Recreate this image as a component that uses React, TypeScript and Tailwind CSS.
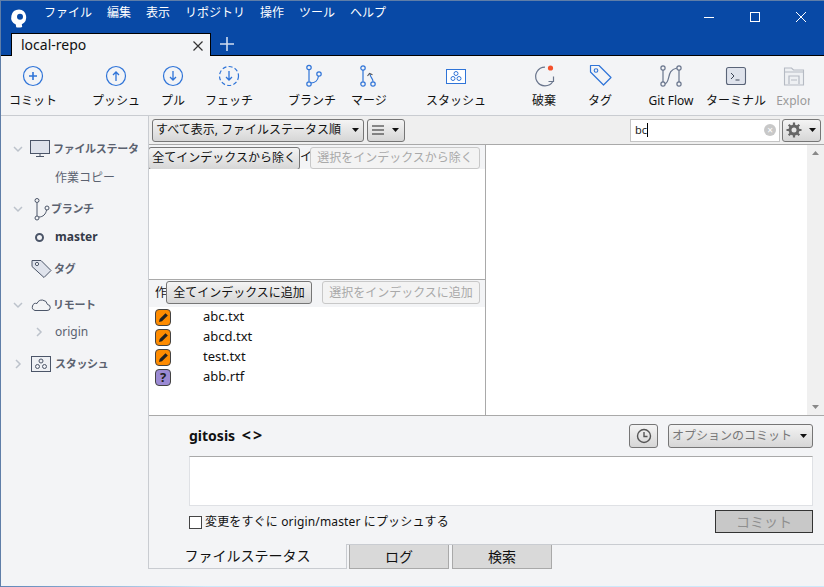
import React from "react";

const font = { fontFamily: '"Noto Sans", "Noto Sans CJK JP", sans-serif' };

const Ic = ({ children, w = 32, h = 32 }: { children: React.ReactNode; w?: number; h?: number }) => (
  <svg width={w} height={h} viewBox={`0 0 ${w} ${h}`} fill="none">{children}</svg>
);

const B = "#2f74d8";

const Circle = ({ arrow, dashed }: { arrow: "plus" | "up" | "down"; dashed?: boolean }) => (
  <Ic>
    <circle cx="16" cy="16" r="9.5" stroke={B} strokeWidth="1.2" strokeDasharray={dashed ? "4 2.3" : undefined} />
    {arrow === "plus" && <path d="M12 16h8M16 12v8" stroke={B} strokeWidth="1.6" />}
    {arrow === "up" && <path d="M16 21v-9M13 15l3-3 3 3" stroke={B} strokeWidth="1.3" />}
    {arrow === "down" && <path d="M16 11v9M13 17l3 3 3-3" stroke={B} strokeWidth="1.3" />}
  </Ic>
);

const BranchIcon = ({ c = B }: { c?: string }) => (
  <Ic>
    <circle cx="13" cy="7.5" r="2.2" stroke={c} strokeWidth="1.2" />
    <circle cx="13" cy="24" r="2.2" stroke={c} strokeWidth="1.2" />
    <circle cx="23" cy="14" r="2.2" stroke={c} strokeWidth="1.2" />
    <path d="M13 10v11.5M15 23c4 0 7-3 7.5-7" stroke={c} strokeWidth="1.2" />
  </Ic>
);

const MergeIcon = () => (
  <Ic>
    <circle cx="10" cy="8" r="2.2" stroke={B} strokeWidth="1.2" />
    <circle cx="10" cy="24" r="2.2" stroke={B} strokeWidth="1.2" />
    <circle cx="20" cy="24" r="2.2" stroke={B} strokeWidth="1.2" />
    <path d="M10 10v11.5M20 21.5c0-3-2.5-3.5-3-7.5" stroke={B} strokeWidth="1.2" />
    <path d="M14.5 16l2-2.5 3 1.3" stroke="#555" strokeWidth="1.1" />
  </Ic>
);

const StashIcon = ({ c = B, fill = "white" }: { c?: string; fill?: string }) => (
  <Ic>
    <rect x="6.5" y="9.5" width="19" height="14" fill={fill} stroke={c} strokeWidth="1" />
    <circle cx="16" cy="13.5" r="2" stroke={c} />
    <circle cx="13" cy="18.5" r="2" stroke={c} />
    <circle cx="19" cy="18.5" r="2" stroke={c} />
  </Ic>
);

const DiscardIcon = () => (
  <Ic>
    <path d="M17 7.2a9.3 9.3 0 1 0 8 14" stroke="#69758c" strokeWidth="1.2" />
    <path d="M20.5 21.5h5v-5" stroke="#69758c" strokeWidth="1.2" />
    <circle cx="22.5" cy="8" r="2.6" fill="#f4512c" />
  </Ic>
);

const TagIcon = ({ c = B, fill = "none" }: { c?: string; fill?: string }) => (
  <Ic>
    <path d="M6.5 7.5h8.5l12 12-7.5 7.5-13-13z" fill={fill} stroke={c} strokeWidth="1.2" strokeLinejoin="round" transform="translate(0 -2)" />
    <circle cx="12" cy="10.5" r="1.8" stroke={c} strokeWidth="1.1" />
  </Ic>
);

const FlowIcon = () => (
  <Ic>
    <circle cx="8" cy="8" r="2.1" stroke="#69758c" strokeWidth="1.2" />
    <circle cx="8" cy="24" r="2.1" stroke="#69758c" strokeWidth="1.2" />
    <circle cx="24" cy="8" r="2.1" stroke="#69758c" strokeWidth="1.2" />
    <circle cx="24" cy="24" r="2.1" stroke="#69758c" strokeWidth="1.2" />
    <path d="M8 10v12M24 10v12M10 24c6-3 1-14 12-16" stroke="#69758c" strokeWidth="1.2" />
  </Ic>
);

const TermIcon = () => (
  <Ic>
    <rect x="6.5" y="7.5" width="19" height="17" rx="2" fill="#dfe3ec" stroke="#5a6478" strokeWidth="1.1" />
    <path d="M11 13l3 3-3 3M15.5 20h4" stroke="#3d4657" strokeWidth="1" />
  </Ic>
);

const ExplorerIcon = () => (
  <Ic>
    <path d="M6.5 8h7l2 2h10v15h-19z" fill="#eef0f3" stroke="#b5bac3" strokeWidth="1.1" />
    <path d="M6.5 12h19" stroke="#b5bac3" />
    <path d="M11 24v-8h10v8M13 20h6" stroke="#b5bac3" strokeWidth="1.2" />
  </Ic>
);

const tools: { label: string; icon: React.ReactNode; cls: string; muted?: boolean }[] = [
  { label: "コミット", icon: <Circle arrow="plus" />, cls: "ml-[4px]" },
  { label: "プッシュ", icon: <Circle arrow="up" />, cls: "ml-[27px]" },
  { label: "プル", icon: <Circle arrow="down" />, cls: "ml-[1px]" },
  { label: "フェッチ", icon: <Circle arrow="down" dashed />, cls: "ml-0" },
  { label: "ブランチ", icon: <BranchIcon />, cls: "ml-[27px]" },
  { label: "マージ", icon: <MergeIcon />, cls: "ml-[1px]" },
  { label: "スタッシュ", icon: <StashIcon />, cls: "ml-[31px]" },
  { label: "破棄", icon: <DiscardIcon />, cls: "ml-[32px]" },
  { label: "タグ", icon: <TagIcon />, cls: "ml-0" },
  { label: "Git Flow", icon: <FlowIcon />, cls: "ml-[15px]" },
  { label: "ターミナル", icon: <TermIcon />, cls: "ml-[9px]" },
  { label: "Explor", icon: <ExplorerIcon />, cls: "ml-[2px]", muted: true },
];

const Caret = ({ c = "#111" }: { c?: string }) => (
  <svg width="7" height="4" viewBox="0 0 7 4"><path d="M0 0h7L3.5 4z" fill={c} /></svg>
);

const Chevron = ({ open }: { open?: boolean }) => (
  <svg width="10" height="10" viewBox="0 0 10 10" fill="none">
    <path d={open ? "M1 3l4 4 4-4" : "M3 1l4 4-4 4"} stroke="#bcc2cb" strokeWidth="1.5" />
  </svg>
);

const btn = "flex items-center rounded-[3px] border border-[#767676] bg-gradient-to-b from-[#f4f4f4] to-[#d6d6d6] text-[12px] text-[#111] whitespace-nowrap shrink-0";
const btnOff = "flex items-center justify-center rounded-[3px] border border-[#c8c8c8] bg-[#f3f3f3] text-[12px] text-[#a9a9a9] whitespace-nowrap shrink-0";

const Pencil = () => (
  <div className="w-[16px] h-[17px] rounded-[4px] border border-[#444] bg-[#ff8c00] flex items-center justify-center">
    <svg width="11" height="11" viewBox="0 0 11 11"><path d="M1 10l.7-3L7.5 1.2l2.3 2.3L4 9.3z" fill="#222" /></svg>
  </div>
);
const Question = () => (
  <div className="w-[16px] h-[17px] rounded-[4px] border border-[#444] bg-[#9b8ad4] flex items-center justify-center text-[13px] font-bold leading-none text-[#222]">?</div>
);

const files = [
  { n: "abc.txt", i: <Pencil /> },
  { n: "abcd.txt", i: <Pencil /> },
  { n: "test.txt", i: <Pencil /> },
  { n: "abb.rtf", i: <Question /> },
];

const sideHead = "font-bold text-[11px] tracking-[-0.3px] whitespace-nowrap";

export default function App() {
  return (
    <div style={font} className="w-[824px] h-[587px] flex flex-col overflow-hidden bg-[#f3f4f6] text-[12px] text-[#111] border-l border-t border-[#5f7ea8]">
      {/* title area */}
      <div className="h-[55px] shrink-0 bg-[#0849a6] border-b border-black flex flex-col">
        <div className="h-[32px] flex items-center text-white">
          <svg width="18" height="20" viewBox="0 0 18 20" className="ml-[9px] mt-[1px]">
            <path d="M9 1.5a7.8 7.8 0 0 0-3.2 14.9l.4 2.9c2 .4 4.2.3 6-.4l-.4-2.6A7.8 7.8 0 0 0 9 1.5z" fill="white" />
            <circle cx="10" cy="8.8" r="3" fill="#0849a6" />
          </svg>
          <div className="flex items-center mb-[8px]">
            <span className="ml-[16px]">ファイル</span>
            <span className="ml-[15px]">編集</span>
            <span className="ml-[15px]">表示</span>
            <span className="ml-[15px]">リポジトリ</span>
            <span className="ml-[15px]">操作</span>
            <span className="ml-[15px]">ツール</span>
            <span className="ml-[15px]">ヘルプ</span>
          </div>
          <div className="ml-auto flex items-center">
            <svg width="12" height="12" viewBox="0 0 12 12"><path d="M1 6.5h10" stroke="white" /></svg>
            <svg width="12" height="12" viewBox="0 0 12 12" className="ml-[34px]"><rect x="1.5" y="1.5" width="9" height="9" fill="none" stroke="white" /></svg>
            <svg width="12" height="12" viewBox="0 0 12 12" className="ml-[34px] mr-[17px]"><path d="M1 1l10 10M11 1L1 11" stroke="white" /></svg>
          </div>
        </div>
        <div className="h-[22px] flex items-end">
          <div className="ml-[10px] w-[200px] h-[23px] bg-[#f3f4f6] border border-black border-b-0 flex items-center pl-[9px] pr-[7px] pb-[2px] text-[14px] relative top-px">
            <span>local-repo</span>
            <svg width="10" height="10" viewBox="0 0 10 10" className="ml-auto mt-[3px]"><path d="M.5.5l9 9M9.5.5l-9 9" stroke="#333" strokeWidth="1.2" /></svg>
          </div>
          <svg width="14" height="14" viewBox="0 0 14 14" className="ml-[9px] mb-[4px]"><path d="M7 0v14M0 7h14" stroke="#cfdcf0" strokeWidth="1.6" /></svg>
        </div>
      </div>

      {/* toolbar */}
      <div className="h-[59px] shrink-0 flex overflow-hidden">
        <div className="flex w-[809px] overflow-hidden pt-[4px]">
          {tools.map((t) => (
            <div key={t.label} className={`w-[56px] shrink-0 flex flex-col items-center ${t.cls}`}>
              {t.icon}
              <span className={`whitespace-nowrap leading-[18px] ${t.muted ? "text-[#9a9a9a]" : ""}`}>{t.label}</span>
            </div>
          ))}
        </div>
      </div>

      {/* body */}
      <div className="flex-1 flex min-h-0 border-t border-[#c9ccd1]">
        {/* sidebar */}
        <aside className="w-[147px] shrink-0 text-[12px] text-[#5b6270] overflow-hidden pt-[17px]">
          <div className="flex items-center h-[32px] pl-[12px]">
            <Chevron open />
            <svg width="22" height="20" viewBox="0 0 22 20" className="ml-[7px]" fill="none">
              <rect x=".5" y="1.5" width="19" height="13" fill="#dfe3ec" stroke="#4b5568" />
              <path d="M6 17.5h8M10 15v2" stroke="#4b5568" />
            </svg>
            <span className={`ml-[1px] w-[85px] overflow-hidden ${sideHead}`}>ファイルステータス</span>
          </div>
          <div className="h-[25px] pl-[54px] flex items-center">作業コピー</div>
          <div className="flex items-center h-[34px] pl-[12px] mt-[2px]">
            <Chevron open />
            <svg width="24" height="26" viewBox="0 0 24 26" className="ml-[3px]" fill="none">
              <circle cx="11" cy="4.5" r="2" stroke="#4b5568" />
              <circle cx="11" cy="22" r="2" stroke="#4b5568" />
              <circle cx="21" cy="12" r="2" stroke="#4b5568" />
              <path d="M11 7v13M13 21c4 0 7-3 7.5-7" stroke="#4b5568" />
            </svg>
            <span className={`ml-[1px] ${sideHead}`}>ブランチ</span>
          </div>
          <div className="h-[24px] flex items-center pl-[34px] -mt-px">
            <span className="w-[9px] h-[9px] rounded-full border-2 border-[#4b5568]" />
            <span className="ml-[11px] font-bold text-[#333a48]">master</span>
          </div>
          <div className="flex items-center h-[36px] pl-[30px] mt-[2px]">
            <svg width="22" height="22" viewBox="0 0 22 22" fill="none">
              <path d="M1 2.5h9l10 10-7 7L1 8.5z" fill="#dfe3ec" stroke="#4b5568" strokeLinejoin="round" />
              <circle cx="6" cy="6" r="1.6" fill="white" stroke="#4b5568" />
            </svg>
            <span className={`ml-[1px] ${sideHead}`}>タグ</span>
          </div>
          <div className="flex items-center h-[36px] pl-[12px]">
            <Chevron open />
            <svg width="20" height="14" viewBox="0 0 20 14" className="ml-[8px]" fill="none">
              <path d="M4 12.5h12a3 3 0 0 0 .5-6 5.5 5.5 0 0 0-10.5-1A3.6 3.6 0 0 0 4 12.5z" stroke="#4b5568" />
            </svg>
            <span className={`ml-[2px] ${sideHead}`}>リモート</span>
          </div>
          <div className="h-[20px] flex items-center pl-[33px] -mt-px">
            <Chevron />
            <span className="ml-[11px]">origin</span>
          </div>
          <div className="flex items-center h-[36px] pl-[12px] mt-[4px]">
            <Chevron />
            <svg width="20" height="16" viewBox="0 0 20 16" className="ml-[8px]" fill="none">
              <rect x=".5" y=".5" width="19" height="15" fill="#eef0f4" stroke="#4b5568" />
              <circle cx="10" cy="5" r="2" stroke="#4b5568" />
              <circle cx="6.5" cy="10.5" r="2" stroke="#4b5568" />
              <circle cx="13.5" cy="10.5" r="2" stroke="#4b5568" />
            </svg>
            <span className={`ml-[4px] ${sideHead}`}>スタッシュ</span>
          </div>
        </aside>

        {/* main */}
        <main className="flex-1 min-w-0 h-[453px] flex flex-col border-l border-[#c9ccd1]">
          <div className="h-[29px] shrink-0 bg-[#efefef] flex items-center pl-[3px] border-b border-[#a9a9a9]">
            <div className={`${btn} h-[23px] w-[212px] pl-[3px]`}>
              <span>すべて表示, ファイルステータス順</span>
              <span className="ml-auto mr-[4px]"><Caret /></span>
            </div>
            <div className={`${btn} h-[23px] w-[38px] ml-[3px] pl-[4px]`}>
              <svg width="12" height="10" viewBox="0 0 12 10"><path d="M0 1h12M0 5h12M0 9h12" stroke="#222" /></svg>
              <span className="ml-auto mr-[5px]"><Caret /></span>
            </div>
            <div className="ml-auto w-[150px] h-[23px] bg-white border border-[#c4c4c4] flex items-center pl-[4px] pr-[3px] text-[11px] text-[#222]">
              <span>bc</span><span className="w-px h-[14px] bg-black" />
              <span className="ml-auto w-[12px] h-[12px] rounded-full bg-[#c8c8c8] text-white text-[10px] leading-[12px] text-center">×</span>
            </div>
            <div className={`${btn} h-[23px] w-[39px] ml-[2px] mr-[3px] pl-[3px]`}>
              <svg width="16" height="16" viewBox="0 0 16 16"><circle cx="8" cy="8" r="4" fill="none" stroke="#666" strokeWidth="3" /><path d="M8 0.5v3M8 12.5v3M.5 8h3M12.5 8h3M2.7 2.7l2.1 2.1M11.2 11.2l2.1 2.1M13.3 2.7l-2.1 2.1M4.8 11.2l-2.1 2.1" stroke="#666" strokeWidth="2.2" /></svg>
              <span className="ml-auto mr-[4px]"><Caret /></span>
            </div>
          </div>

          <div className="flex h-[271px] shrink-0 border-b border-[#a9a9a9]">
            <div className="w-[337px] shrink-0 flex flex-col border-r border-[#a9a9a9] bg-white">
              {/* staged */}
              <div className="h-[135px] shrink-0 border-b border-[#a9a9a9] flex flex-col">
                <div className="h-[24px] bg-[#f3f4f6] flex items-center overflow-hidden">
                  <div className={`${btn} h-[23px] w-[152px] -ml-px mt-[2px] justify-end pr-[3px]`}>全てインデックスから除く</div>
                  <span className="w-[10px] overflow-hidden whitespace-nowrap">インデックス</span>
                  <div className={`${btnOff} h-[22px] w-[170px] mt-[2px]`}>選択をインデックスから除く</div>
                </div>
              </div>
              {/* unstaged */}
              <div className="flex-1 min-h-0">
                <div className="h-[27px] bg-[#f3f4f6] flex items-center pl-[6px] pb-[2px]">
                  <span className="w-[11px] overflow-hidden whitespace-nowrap">作業</span>
                  <div className={`${btn} h-[23px] w-[146px] justify-center`}>全てインデックスに追加</div>
                  <div className={`${btnOff} h-[23px] w-[158px] ml-[10px]`}>選択をインデックスに追加</div>
                </div>
                {files.map((f) => (
                  <div key={f.n} className="h-[20px] flex items-center pl-[6px] text-[13px]">
                    {f.i}
                    <span className="ml-[32px]">{f.n}</span>
                  </div>
                ))}
              </div>
            </div>
            <div className="flex-1 bg-white flex justify-end">
              <div className="w-[17px] bg-[#f0f0f0] flex flex-col items-center justify-between py-[6px]">
                <svg width="7" height="4" viewBox="0 0 7 4"><path d="M3.5 0L7 4H0z" fill="#888" /></svg>
                <svg width="7" height="4" viewBox="0 0 7 4"><path d="M0 0h7L3.5 4z" fill="#888" /></svg>
              </div>
            </div>
          </div>

          {/* commit */}
          <div className="h-[128px] shrink-0 pl-[40px] pr-[11px] flex flex-col">
            <div className="h-[40px] flex items-center">
              <span className="text-[14px] font-bold mb-[2px] whitespace-nowrap">gitosis <span className="ml-[3px] text-[16px] tracking-[2px]">&lt;&gt;</span></span>
              <div className={`${btn} ml-auto h-[24px] w-[29px] justify-center`}>
                <svg width="16" height="16" viewBox="0 0 16 16" fill="none"><circle cx="8" cy="8" r="6.5" stroke="#555" strokeWidth="1.4" /><path d="M8 4v4.5h3.5" stroke="#555" strokeWidth="1.4" /></svg>
              </div>
              <div className={`${btn} ml-[10px] h-[24px] w-[145px] pl-[3px] text-[#777]`}>
                <span>オプションのコミット</span>
                <span className="ml-auto mr-[5px]"><Caret /></span>
              </div>
            </div>
            <div className="h-[50px] bg-white border border-[#dfe1e5] border-t-[#a9a9a9]" />
            <div className="h-[32px] flex items-center">
              <span className="w-[13px] h-[13px] border border-[#444] bg-white" />
              <span className="ml-[3px] tracking-[0.15px]">変更をすぐに origin/master にプッシュする</span>
              <div className="ml-auto h-[23px] w-[98px] mb-[2px] bg-[#c8c8c8] border border-[#333] flex items-center justify-center text-[14px] text-[#8f8f8f]">コミット</div>
            </div>
          </div>

          {/* tabs */}
          <div className="h-[25px] shrink-0 flex items-stretch">
            <div className="w-[198px] shrink-0 bg-[#f3f4f6] border-r border-b border-[#c9ccd1] flex items-center justify-center pb-[2px] text-[14px]">ファイルステータス</div>
            <div className="flex-1 flex border-t border-[#c9ccd1]">
              <div className="w-[100px] ml-[2px] bg-[#d9d9d9] border border-t-0 border-[#a9a9a9] flex items-center justify-center text-[14px]">ログ</div>
              <div className="w-[100px] ml-[3px] bg-[#d9d9d9] border border-t-0 border-[#a9a9a9] flex items-center justify-center text-[14px]">検索</div>
            </div>
          </div>
        </main>
      </div>
      <div className="h-px shrink-0 bg-gradient-to-r from-[#5f86b8] to-[#cde8fa] to-[25%]" />
    </div>
  );
}
